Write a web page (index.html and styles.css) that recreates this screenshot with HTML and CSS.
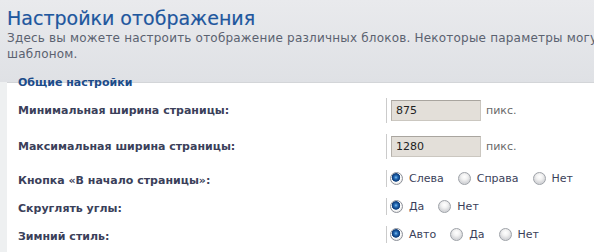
FILE: index.html
```html
<!DOCTYPE html>
<html lang="ru">
<head>
<meta charset="utf-8">
<title>Настройки отображения</title>
<link rel="stylesheet" href="styles.css">
</head>
<body>
<div class="page">
  <div class="head">
    <h1 class="title">Настройки отображения</h1>
    <p class="desc">Здесь вы можете настроить отображение различных блоков. Некоторые параметры могут быть заданы<br>шаблоном.</p>
  </div>
  <div class="panel">
    <h2 class="legend">Общие настройки</h2>
    <div class="rows">
      <div class="row">
        <div class="label">Минимальная ширина страницы:</div>
        <div class="value"><input class="field" type="text" value="875"><span class="unit">пикс.</span></div>
      </div>
      <div class="row">
        <div class="label">Максимальная ширина страницы:</div>
        <div class="value"><input class="field" type="text" value="1280"><span class="unit">пикс.</span></div>
      </div>
      <div class="row row-radio">
        <div class="label">Кнопка «В начало страницы»:</div>
        <div class="value">
          <label class="opt"><input class="radio" type="radio" name="top" checked>Слева</label>
          <label class="opt"><input class="radio" type="radio" name="top">Справа</label>
          <label class="opt"><input class="radio" type="radio" name="top">Нет</label>
        </div>
      </div>
      <div class="row row-radio">
        <div class="label">Скруглять углы:</div>
        <div class="value">
          <label class="opt"><input class="radio" type="radio" name="round" checked>Да</label>
          <label class="opt"><input class="radio" type="radio" name="round">Нет</label>
        </div>
      </div>
      <div class="row row-radio">
        <div class="label">Зимний стиль:</div>
        <div class="value">
          <label class="opt"><input class="radio" type="radio" name="winter" checked>Авто</label>
          <label class="opt"><input class="radio" type="radio" name="winter">Да</label>
          <label class="opt"><input class="radio" type="radio" name="winter">Нет</label>
        </div>
      </div>
    </div>
  </div>
</div>
</body>
</html>
```
FILE: styles.css
```css
html, body {
  margin: 0;
  padding: 0;
  overflow: hidden;
}
body {
  font-family: "DejaVu Sans", Verdana, sans-serif;
  background: #eef0f1;
}
.page {
  width: 720px;
  height: 252px;
  background: #eef0f1;
}
.head {
  background: linear-gradient(#e9eaed, #dfe1e5);
  padding: 6px 7px 20px 7px;
}
.title {
  margin: 0;
  font-size: 19px;
  line-height: 24px;
  font-weight: normal;
  color: #1e579e;
  -webkit-text-stroke: 0.2px #1e579e;
}
.desc {
  margin: 0;
  font-size: 12px;
  line-height: 16px;
  letter-spacing: 0.2px;
  color: #5b6270;
  white-space: nowrap;
}
.panel {
  margin-left: 7px;
  background: #fff;
  border-top: 1px solid #d3d5d8;
  height: 170px;
}
.legend {
  margin: -7px 0 0 11px;
  font-size: 11px;
  line-height: 13px;
  font-weight: bold;
  color: #1c4c8a;
}
.rows {
  display: flex;
  flex-direction: column;
  gap: 11px;
  padding-top: 9px;
}
.row {
  display: grid;
  grid-template-columns: 379px 1fr;
  align-items: center;
}
.label {
  padding-left: 11px;
  font-size: 11px;
  font-weight: bold;
  color: #3b3f5a;
}
.row-radio .label {
  padding-top: 4px;
}
.value {
  display: flex;
  align-items: center;
  border-left: 1px solid #cbcbcb;
  padding: 2px 0 2px 3px;
  font-size: 11px;
  color: #3b3f5a;
}
.row-radio .value {
  gap: 14px;
}
.field {
  box-sizing: border-box;
  width: 90px;
  height: 21px;
  margin: 0 0 0 1px;
  padding: 0 0 0 4px;
  border: 1px solid #cbc7c0;
  border-top-color: #a9a59f;
  border-left-color: #b5b1ab;
  background: #e3dfd9;
  font-family: "DejaVu Sans", Verdana, sans-serif;
  font-size: 11px;
  color: #222;
  outline: none;
}
.unit {
  margin-left: 5px;
  color: #6a6a6a;
  font-size: 11px;
}
.opt {
  display: flex;
  align-items: center;
  gap: 6px;
  line-height: 13px;
}
.radio {
  appearance: none;
  -webkit-appearance: none;
  box-sizing: border-box;
  width: 13px;
  height: 13px;
  margin: 0;
  border-radius: 50%;
  border: 1px solid #9ea2a8;
  background: radial-gradient(circle at 50% 35%, #ffffff 0, #f2f2f2 3px, #d6d7da 6px);
}
.radio:checked {
  border-color: #8c9098;
  background: radial-gradient(circle at 45% 40%, #8cc6f0 0, #2a74bf 1.5px, #0f3f7e 3.5px, #1b4d8a 4px, #ffffff 4.6px, #ececec 6px);
}
```
